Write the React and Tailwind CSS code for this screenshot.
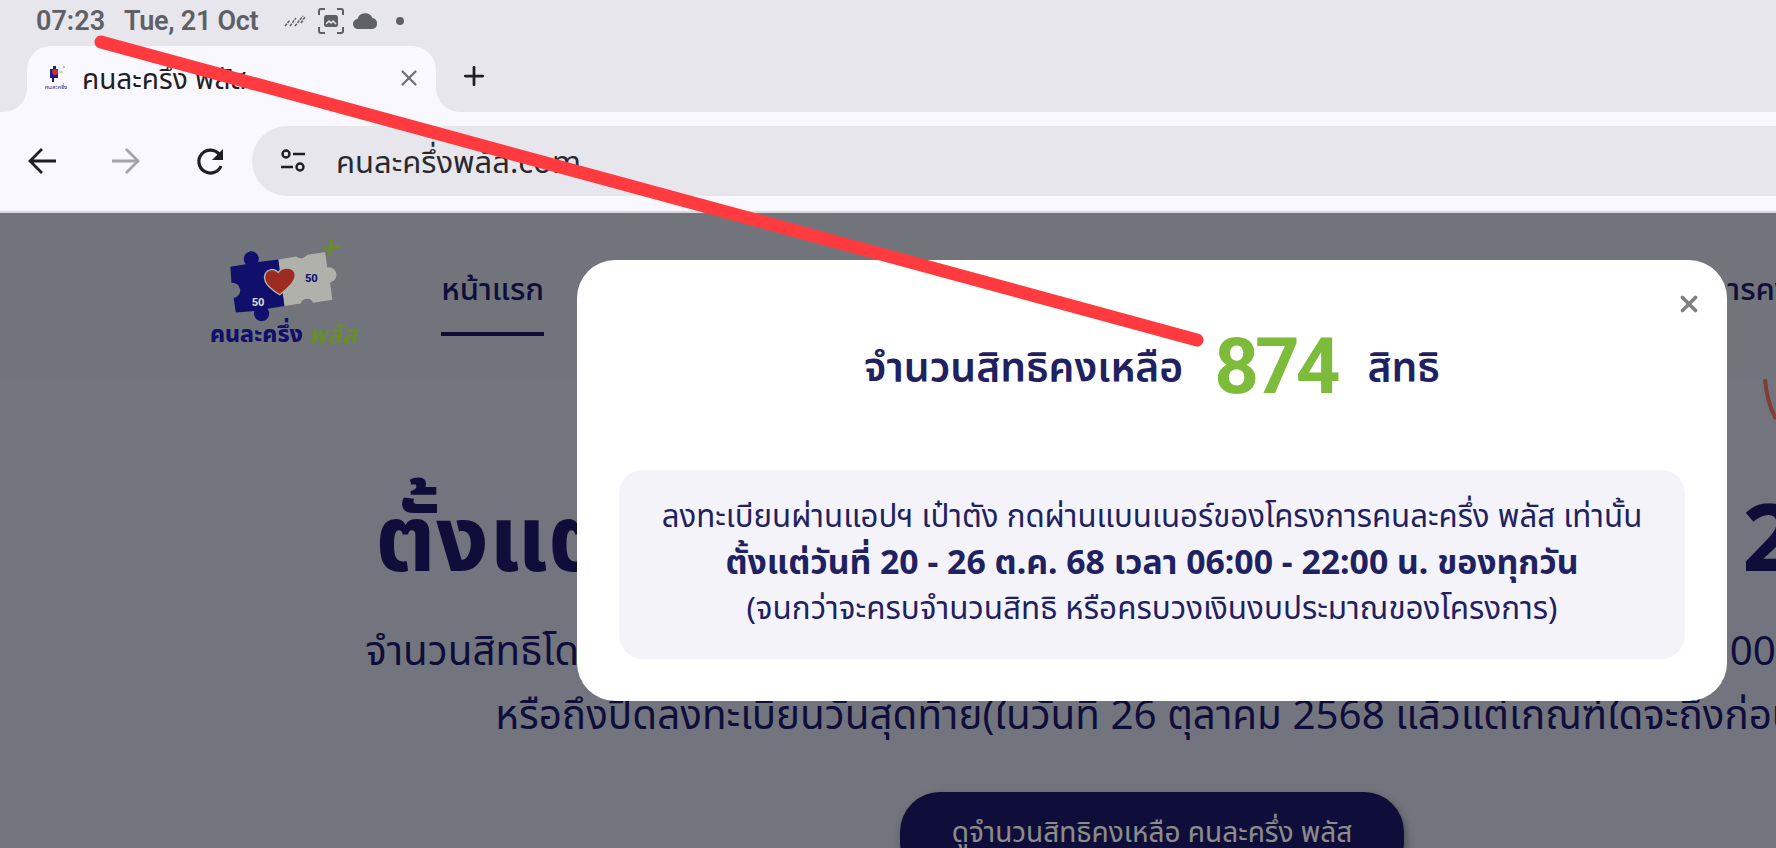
import React from 'react';
import { X, Plus } from 'lucide-react';

const thai = "font-['Noto_Sans','Noto_Sans_Thai','Liberation_Sans',sans-serif]";

const StatusBar = () => (
  <div className="h-[46px] bg-[#e6e6ec] flex items-center pl-[36px] pb-[4px] text-[#5f6066] text-[27px] font-semibold font-['Roboto',sans-serif]">
    <span>07:23</span>
    <span className="ml-[19px] tracking-[-0.3px]">Tue, 21 Oct</span>
    <svg className="ml-[26px] w-[22px] h-[16px]" viewBox="0 0 22 16" fill="none" stroke="#5f6066" strokeWidth="1.5">
      <path d="M1 13 6 7M6 13l6-8M11 13l8-10M17 10l4-6" strokeDasharray="3 1" />
    </svg>
    <svg className="ml-[12px] w-[26px] h-[26px]" viewBox="0 0 26 26" fill="none" stroke="#5f6066" strokeWidth="2">
      <path d="M1 7V3q0-2 2-2h4M19 1h4q2 0 2 2v4M25 19v4q0 2-2 2h-4M7 25H3q-2 0-2-2v-4" />
      <rect x="6" y="7" width="14" height="12" rx="2.5" fill="#5f6066" stroke="none" />
      <path d="M8 16l3-3 2 2 2-2 3 3" stroke="#e6e6ec" strokeWidth="1.5" />
    </svg>
    <svg className="ml-[8px] w-[27px] h-[18px]" viewBox="0 0 26 18" fill="#5f6066">
      <path d="M6 17a5 5 0 0 1-1-10 8 8 0 0 1 15-1 5.600 5.600 0 0 1 0 11z" />
    </svg>
    <span className="ml-[17px] w-[8px] h-[8px] rounded-full bg-[#5f6066]" />
  </div>
);

const Favicon = () => (
  <div className="w-[26px] flex flex-col items-center shrink-0">
    <svg className="w-[22px] h-[20px]" viewBox="0 0 22 20">
      <path d="M5 5h3V2h3v3h2v9H9v4H7v-4H5z" fill="#1b1f8a" />
      <circle cx="10" cy="8" r="3" fill="#c8342b" />
      <path d="M14 8h4M18 3h2M19 2v2" stroke="#9db56a" strokeWidth="1" />
    </svg>
    <span className="text-[6px] leading-[7px] text-[#1b1f8a] whitespace-nowrap">คนละครึ่ง</span>
  </div>
);

const TabStrip = () => (
  <div className="h-[66px] flex bg-[linear-gradient(#e6e6ec_50%,#f9f7ff_50%)]">
    <div className="w-[27px] bg-[#e6e6ec] rounded-br-[24px]" />
    <div className={`w-[409px] bg-[#f9f7ff] rounded-t-[24px] flex items-center pl-[16px] pr-[14px] pb-[3px] ${thai}`}>
      <Favicon />
      <span className="ml-[13px] text-[28px] leading-[40px] text-[#1f1f23] whitespace-nowrap">คนละครึ่ง พลัส</span>
      <X className="ml-auto text-[#6e6e73]" size={26} strokeWidth={2} />
    </div>
    <div className="flex-1 bg-[#e6e6ec] rounded-bl-[24px] flex items-center pl-[23px] pb-[6px]">
      <Plus className="text-[#1f1f23]" size={30} strokeWidth={2.2} />
    </div>
  </div>
);

const Toolbar = () => (
  <div className="h-[99px] bg-[#f9f7ff] flex items-center pb-[2px]">
    <svg className="ml-[27px] w-[30px] h-[30px]" viewBox="0 0 30 30" fill="none" stroke="#1f1f23" strokeWidth="2.8">
      <path d="M29 15H3M15 3 3 15l12 12" />
    </svg>
    <svg className="ml-[54px] w-[30px] h-[30px]" viewBox="0 0 30 30" fill="none" stroke="#a3a3a8" strokeWidth="2.8">
      <path d="M1 15h26M15 3l12 12-12 12" />
    </svg>
    <svg className="ml-[54px] w-[32px] h-[32px]" viewBox="0 0 32 32" fill="none">
      <path d="M26 21a11.500 11.500 0 1 1-1.500-11.500" stroke="#1f1f23" strokeWidth="3.200" />
      <path d="M28 4v11H17z" fill="#1f1f23" />
    </svg>
    <div className={`ml-[25px] flex-1 h-[70px] bg-[#e6e6ec] rounded-l-[35px] flex items-center pl-[28px] ${thai}`}>
      <svg className="w-[26px] h-[26px]" viewBox="0 0 26 26" fill="none" stroke="#1f1f23" strokeWidth="2.400">
        <circle cx="6" cy="6" r="3.500" />
        <path d="M13 6h12M1 19h12" />
        <circle cx="20" cy="19" r="3.500" />
      </svg>
      <span className="ml-[30px] text-[31px] leading-[40px] text-[#2a2a2e]">คนละครึ่งพลัส.com</span>
    </div>
  </div>
);

// sits above the dim layer, colours are already the dimmed ones
const Logo = () => (
  <div className="relative z-10 w-[148px] flex flex-col items-center">
    <svg className="w-[120px] h-[90px] ml-[10px] shrink-0" viewBox="150 60 330 250">
      <path d="M288 128 338 120a20 20 0 0 0 30-5L418 108 424 150a21 21 0 1 1 8 42L438 240 385 248a19 19 0 0 0-35 2L305 257z" fill="#b1b1ac" />
      <path d="M155 148 198 141a21 21 0 1 1 34-6L288 128 305 257 258 265a21 21 0 1 1-36 6L170 275 164 235a21 21 0 0 0-6-42z" fill="#10106c" />
      <path d="M292 226C270 212 248 196 250 175 253 155 275 150 288 164 300 146 332 148 335 170 337 190 312 210 292 226z" fill="#9e2b22" stroke="#b1b1ac" strokeWidth="4" />
      <text x="362" y="190" fontSize="31" fontWeight="800" fill="#10106c" fontFamily="Roboto, sans-serif">50</text>
      <text x="214" y="256" fontSize="31" fontWeight="800" fill="#d4d4d0" fontFamily="Roboto, sans-serif">50</text>
      <path d="M410 98 462 92M436 72 430 118" stroke="#6a8c28" strokeWidth="8" fill="none" />
    </svg>
    <div className="flex items-center gap-[6px] whitespace-nowrap -mt-[6px]">
      <span className="text-[23px] leading-[28px] font-extrabold text-[#10106c]">คนละครึ่ง</span>
      <span className="text-[25px] leading-[28px] font-semibold italic text-[#6a8c28]">พลัส</span>
    </div>
  </div>
);

const Header = () => (
  <div className="h-[166px] bg-[#cfd3e1] flex pl-[210px] pt-[22px] text-[#1d1b6b]">
    <Logo />
    <div className="ml-[85px] h-[101px] w-[103px] border-b-[4px] border-[#1d1b6b] text-[31px] font-medium leading-[40px] pt-[33px] whitespace-nowrap">
      หน้าแรก
    </div>
    <div className="ml-[1075px] text-[31px] font-medium leading-[40px] pt-[33px] whitespace-nowrap">เงื่อนไขการคงสิทธิ</div>
  </div>
);

const Hero = () => (
  <div className="w-[2304px] flex flex-col items-center text-[#1d1b6b] pt-[106px]">
    <h1 className="pl-[26px] text-[93px] leading-[100px] font-bold whitespace-nowrap">ตั้งแต่วันที่ 20 ตุลาคม - 26 ตุลาคม&nbsp; 2568</h1>
    <p className="mt-[33px] text-[40.4px] leading-[64px] whitespace-nowrap">จำนวนสิทธิโดยรวมทั้งหมด 20 ล้านสิทธิ สำหรับประชาชน เปิดให้ลงทะเบียนวันละ 2,000,000 สิทธิ/วัน</p>
    <p className="text-[40.4px] leading-[64px] whitespace-nowrap">หรือถึงปิดลงทะเบียนวันสุดท้าย(ในวันที่ 26 ตุลาคม 2568 แล้วแต่เกณฑ์ใดจะถึงก่อน)</p>
    <button className="mt-[46px] w-[504px] h-[90px] shrink-0 rounded-[40px] bg-[#1d1b6b] text-white text-[28px] pb-[12px] shadow-[2px_4px_8px_rgba(0,0,0,0.35)]">
      ดูจำนวนสิทธิคงเหลือ คนละครึ่ง พลัส
    </button>
  </div>
);

const Modal = () => (
  <div className="absolute left-[577px] top-[47px] w-[1150px] h-[441px] bg-white rounded-[38px] text-[#1f2160] flex flex-col px-[42px]">
    <X className="absolute right-[25px] top-[31px] text-[#808080]" size={26} strokeWidth={3.5} />
    <div className="h-[210px] flex items-center justify-center whitespace-nowrap pt-[4px]">
      <span className="text-[40.8px] font-semibold">จำนวนสิทธิคงเหลือ</span>
      <span className="mx-[31px] text-[78px] leading-[90px] font-bold text-[#7dbb3a] tracking-[-4px] font-['Roboto',sans-serif]">874</span>
      <span className="text-[40.8px] font-semibold">สิทธิ</span>
    </div>
    <div className="h-[189px] bg-[#f3f3f9] rounded-[24px] flex flex-col items-center justify-center whitespace-nowrap pb-[7px]">
      <p className="text-[31.2px] leading-[46px]">ลงทะเบียนผ่านแอปฯ เป๋าตัง กดผ่านแบนเนอร์ของโครงการคนละครึ่ง พลัส เท่านั้น</p>
      <p className="text-[33.8px] leading-[46px] font-bold">ตั้งแต่วันที่ 20 - 26 ต.ค. 68 เวลา 06:00 - 22:00 น. ของทุกวัน</p>
      <p className="text-[31.4px] leading-[46px]">(จนกว่าจะครบจำนวนสิทธิ หรือครบวงเงินงบประมาณของโครงการ)</p>
    </div>
  </div>
);

export default function App() {
  return (
    <div className={`relative w-full h-[848px] overflow-hidden flex flex-col ${thai}`}>
      <StatusBar />
      <TabStrip />
      <Toolbar />
      <div className="relative flex-1 overflow-hidden bg-[#d1d5e5] border-t-2 border-[#d8d8de]">
        <Header />
        <Hero />
        {/* bit of the hero picture that sticks out right of the modal */}
        <svg className="absolute right-0 top-[166px] w-[20px] h-[60px]" viewBox="0 0 20 60" fill="none">
          <path d="M9 0q2 24 11 40" stroke="#e9715f" strokeWidth="4" />
        </svg>
        <div className="absolute inset-0 bg-black/45" />
        <Modal />
      </div>
      {/* red marker stroke drawn over the screenshot */}
      <svg className="absolute inset-0 w-full h-full pointer-events-none" viewBox="0 0 1776 848" fill="none">
        <path d="M101 42 1197 340" stroke="#ff3b3f" strokeWidth="13" strokeLinecap="round" />
      </svg>
    </div>
  );
}
